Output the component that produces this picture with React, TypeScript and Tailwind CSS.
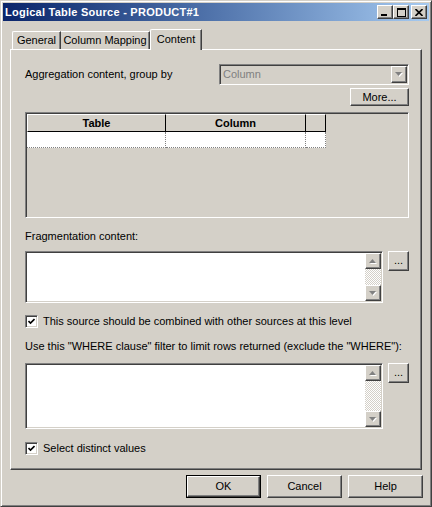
import React from "react";

const raised =
  "border border-t-white border-l-white border-r-[#404040] border-b-[#404040] shadow-[inset_-1px_-1px_0_#808080]";
const sunken =
  "border border-t-[#808080] border-l-[#808080] border-r-white border-b-white shadow-[inset_1px_1px_0_#404040,inset_-1px_-1px_0_#d4d0c8]";

function Arrow({ up, disabled }: { up?: boolean; disabled?: boolean }) {
  const pts = up ? "3.5,0 7,4 0,4" : "0,0 7,0 3.5,4";
  return (
    <svg width="8" height="5" viewBox="0 0 8 5">
      {disabled && <polygon points={pts} fill="#ffffff" transform="translate(1,1)" />}
      <polygon points={pts} fill={disabled ? "#808080" : "#000000"} />
    </svg>
  );
}

function Check() {
  return (
    <div className={`w-[13px] h-[13px] bg-white flex items-center justify-center ${sunken}`}>
      <svg width="7" height="7" viewBox="0 0 7 7">
        <path d="M0.5 3 L2.5 5 L6.5 1" stroke="#000" strokeWidth="1.6" fill="none" />
      </svg>
    </div>
  );
}

function Scrollbar() {
  return (
    <div className="w-[16px] h-full flex flex-col">
      <div className={`h-[16px] bg-[#d4d0c8] flex items-center justify-center ${raised}`}>
        <Arrow up disabled />
      </div>
      <div className="flex-1 bg-[repeating-conic-gradient(#ffffff_0_25%,#d4d0c8_0_50%)] bg-[length:2px_2px]" />
      <div className={`h-[16px] bg-[#d4d0c8] flex items-center justify-center ${raised}`}>
        <Arrow disabled />
      </div>
    </div>
  );
}

function TextBox({ height }: { height: string }) {
  return (
    <div className="flex items-start gap-[5px]">
      <div className={`w-[358px] ${height} bg-white p-[1px] flex justify-end ${sunken}`}>
        <Scrollbar />
      </div>
      <button className={`w-[21px] h-[20px] bg-[#d4d0c8] flex items-center justify-center text-[11px] leading-none pb-[2px] ${raised}`}>
        ...
      </button>
    </div>
  );
}

export default function App() {
  return (
    <div className="w-[432px] h-[507px] bg-[#d4d0c8] border border-t-[#d4d0c8] border-l-[#d4d0c8] border-r-[#404040] border-b-[#404040] shadow-[inset_1px_1px_0_#ffffff,inset_-1px_-1px_0_#808080] p-[2px] flex flex-col font-['Liberation_Sans',Arial,sans-serif] text-[11px] text-black select-none">
      {/* title bar */}
      <div className="h-[18px] bg-linear-to-r from-[#0a246a] to-[#a6caf0] flex items-center pl-[2px] pr-[2px]">
        <span className="text-white font-bold text-[11px] leading-none tracking-[0.25px]">Logical Table Source - PRODUCT#1</span>
        <div className="ml-auto flex items-center">
          <div className={`w-[16px] h-[14px] bg-[#d4d0c8] flex items-end pl-[3px] pb-[2px] ${raised}`}>
            <div className="w-[6px] h-[2px] bg-black" />
          </div>
          <div className={`w-[16px] h-[14px] bg-[#d4d0c8] flex items-center justify-center ${raised}`}>
            <div className="w-[9px] h-[9px] border border-black border-t-2" />
          </div>
          <div className={`ml-[2px] w-[16px] h-[14px] bg-[#d4d0c8] flex items-center justify-center ${raised}`}>
            <svg width="8" height="7" viewBox="0 0 8 7">
              <path d="M0.5 0 L7.5 7 M7.5 0 L0.5 7" stroke="#000" strokeWidth="1.6" />
            </svg>
          </div>
        </div>
      </div>

      {/* tabs */}
      <div className="mt-[8px] ml-[7px] h-[20px] flex items-end relative z-10">
        <div className="ml-[2px] w-[49px] h-[18px] border-t border-l border-white border-r border-r-[#404040] shadow-[inset_-1px_0_0_#808080] rounded-tl-[2px] flex items-center justify-center">
          General
        </div>
        <div className="w-[89px] h-[18px] border-t border-white border-r border-r-[#404040] shadow-[inset_-1px_0_0_#808080] flex items-center justify-center">
          Column Mapping
        </div>
        <div className="w-[52px] h-[21px] -mb-[1px] bg-[#d4d0c8] border-t border-l border-white border-r border-r-[#404040] shadow-[inset_-1px_0_0_#808080] rounded-tl-[2px] flex items-center justify-center pb-[2px]">
          Content
        </div>
      </div>

      {/* panel */}
      <div className={`ml-[7px] mr-[7px] h-[421px] flex flex-col pl-[14px] pr-[12px] pt-[14px] ${raised}`}>
        <div className="flex items-center h-[21px]">
          <span>Aggregation content, group by</span>
          <div className={`ml-auto w-[190px] h-[21px] p-[1px] pl-[3px] bg-[#d4d0c8] flex items-center ${sunken}`}>
            <span className="text-[#808080]">Column</span>
            <div className={`ml-auto w-[16px] h-full flex items-center justify-center ${raised}`}>
              <Arrow disabled />
            </div>
          </div>
        </div>

        <div className="mt-[3px] flex justify-end">
          <button className={`w-[59px] h-[18px] bg-[#d4d0c8] flex items-center justify-center leading-none ${raised}`}>
            More...
          </button>
        </div>

        <div className={`mt-[6px] w-[384px] h-[106px] p-[1px] ${sunken}`}>
          <div className="flex h-[18px]">
            <div className="w-[139px] h-full border-t border-l border-white border-r border-b border-r-black border-b-black font-bold flex items-center justify-center">
              Table
            </div>
            <div className="w-[140px] h-full border-t border-white border-r border-b border-r-black border-b-black font-bold flex items-center justify-center">
              Column
            </div>
            <div className="w-[20px] h-full border-t border-white border-r border-b border-r-black border-b-black" />
          </div>
          <div className="flex h-[16px]">
            <div className="w-[139px] h-full bg-white border-r border-b border-dotted border-[#808080]" />
            <div className="w-[140px] h-full bg-white border-r border-b border-dotted border-[#808080]" />
            <div className="w-[20px] h-full bg-white border-r border-b border-dotted border-[#808080]" />
          </div>
        </div>

        <div className="mt-[12px] h-[13px] leading-[13px]">Fragmentation content:</div>
        <div className="mt-[8px]">
          <TextBox height="h-[52px]" />
        </div>

        <div className="mt-[12px] h-[13px] flex items-center gap-[5px]">
          <Check />
          <span className="leading-[13px]">This source should be combined with other sources at this level</span>
        </div>

        <div className="mt-[12px] h-[13px] leading-[13px]">
          Use this "WHERE clause" filter to limit rows returned (exclude the "WHERE"):
        </div>
        <div className="mt-[10px]">
          <TextBox height="h-[66px]" />
        </div>

        <div className="mt-[13px] h-[13px] flex items-center gap-[5px]">
          <Check />
          <span className="leading-[13px]">Select distinct values</span>
        </div>
      </div>

      {/* buttons */}
      <div className="mt-[5px] mr-[6px] flex justify-end gap-[6px]">
        <div className="border border-black">
          <button className={`w-[73px] h-[21px] bg-[#d4d0c8] flex items-center justify-center ${raised}`}>OK</button>
        </div>
        <button className={`w-[75px] h-[23px] bg-[#d4d0c8] flex items-center justify-center ${raised}`}>Cancel</button>
        <button className={`w-[75px] h-[23px] bg-[#d4d0c8] flex items-center justify-center ${raised}`}>Help</button>
      </div>
    </div>
  );
}
